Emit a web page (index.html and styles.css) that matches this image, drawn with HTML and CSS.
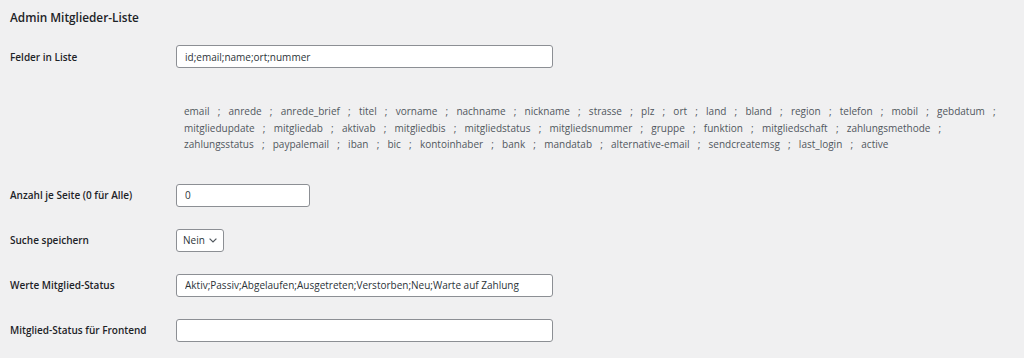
FILE: index.html
```html
<!DOCTYPE html>
<html lang="de">
<head>
  <meta charset="UTF-8">
  <meta name="viewport" content="width=device-width, initial-scale=1.0">
  <title>Admin Mitglieder-Liste</title>
  <link rel="stylesheet" href="styles.css">
</head>
<body>

  <div class="wrap">
    <h2 class="title">Admin Mitglieder-Liste</h2>

    <div class="form-row">
      <label class="label" for="felder">Felder in Liste</label>
      <input id="felder" class="text-input wide" type="text" value="id;email;name;ort;nummer">
    </div>

    <div class="form-row desc-row">
      <div></div>
      <p class="field-list">email ; anrede ; anrede_brief ; titel ; vorname ; nachname ; nickname ; strasse ; plz ; ort ; land ; bland ; region ; telefon ; mobil ; gebdatum ; mitgliedupdate ; mitgliedab ; aktivab ; mitgliedbis ; mitgliedstatus ; mitgliedsnummer ; gruppe ; funktion ; mitgliedschaft ; zahlungsmethode ; zahlungsstatus ; paypalemail ; iban ; bic ; kontoinhaber ; bank ; mandatab ; alternative-email ; sendcreatemsg ; last_login ; active</p>
    </div>

    <div class="form-row">
      <label class="label" for="anzahl">Anzahl je Seite (0 für Alle)</label>
      <input id="anzahl" class="text-input small" type="text" value="0">
    </div>

    <div class="form-row">
      <label class="label" for="suche">Suche speichern</label>
      <div class="select-wrap">
        <select id="suche" class="select">
          <option>Nein</option>
          <option>Ja</option>
        </select>
        <svg class="chevron" width="8" height="5" viewBox="0 0 8 5"><path d="M0.6 0.6 L4 4 L7.4 0.6" fill="none" stroke="#50575e" stroke-width="1.2"/></svg>
      </div>
    </div>

    <div class="form-row">
      <label class="label" for="status">Werte Mitglied-Status</label>
      <input id="status" class="text-input wide" type="text" value="Aktiv;Passiv;Abgelaufen;Ausgetreten;Verstorben;Neu;Warte auf Zahlung">
    </div>

    <div class="form-row">
      <label class="label" for="frontend">Mitglied-Status für Frontend</label>
      <input id="frontend" class="text-input wide" type="text" value="">
    </div>
  </div>

</body>
</html>
```

FILE: styles.css
```css
body {
  margin: 0;
  background-color: #f0f0f1;
  color: #1d2327;
  font-family: "Open Sans", "Noto Sans", Arial, sans-serif;
  font-size: 10px;
}
.wrap {
  padding: 0 10px;
}
.title {
  margin: 0;
  padding-top: 7px;
  font-size: 11.8px;
  font-weight: 600;
  line-height: 20px;
}
.form-row {
  display: grid;
  grid-template-columns: 166px 1fr;
  align-items: center;
  height: 45px;
}
.form-row:nth-child(2) {
  margin-top: 7px;
}
.label {
  font-weight: 600;
  font-size: 10px;
}
.text-input {
  box-sizing: border-box;
  height: 23px;
  padding: 0 8px;
  border: 1px solid #8c8f94;
  border-radius: 3px;
  background: #fff;
  color: #2c3338;
  font-family: inherit;
  font-size: 10px;
}
.wide {
  width: 377px;
}
.small {
  width: 134px;
}
.desc-row {
  height: auto;
  padding: 24px 0 20px;
}
.field-list {
  margin: 0;
  padding-left: 8px;
  color: #50575e;
  font-size: 10px;
  line-height: 16.5px;
  word-spacing: 5.6px;
}
.select-wrap {
  position: relative;
  width: 48px;
}
.select {
  appearance: none;
  box-sizing: border-box;
  width: 48px;
  height: 23px;
  padding: 0 0 0 6px;
  border: 1px solid #8c8f94;
  border-radius: 3px;
  background: #fff;
  color: #2c3338;
  font-family: inherit;
  font-size: 10px;
}
.chevron {
  position: absolute;
  right: 7px;
  top: 9px;
  pointer-events: none;
}
```
